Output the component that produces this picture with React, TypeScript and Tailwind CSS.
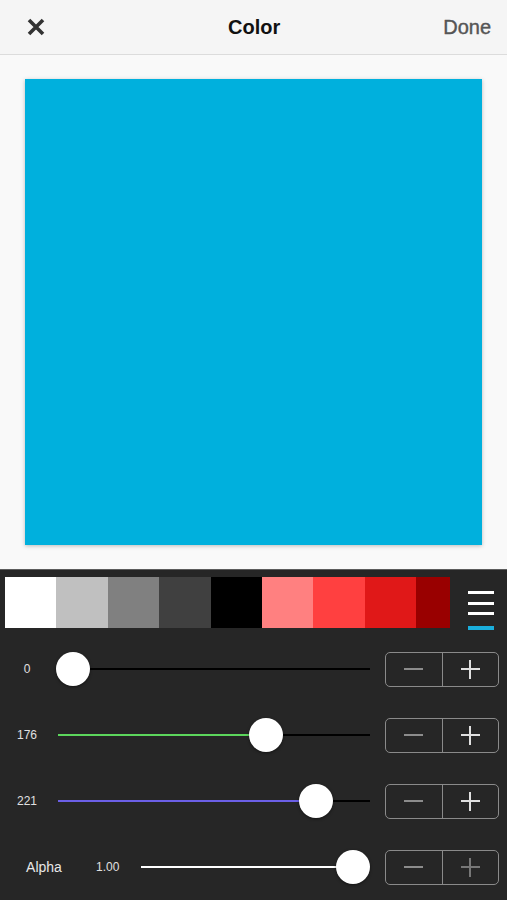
import React from "react";

const swatches = [
  "#ffffff",
  "#c0c0c0",
  "#808080",
  "#404040",
  "#000000",
  "#ff8080",
  "#ff4040",
  "#e01818",
  "#990000",
];

type Row = {
  label: string;
  value: number; // 0..1
  color: string;
  alpha?: boolean;
};

const rows: Row[] = [
  { label: "0", value: 0, color: "#000000" },
  { label: "176", value: 176 / 255, color: "#5cd65c" },
  { label: "221", value: 221 / 255, color: "#6b5fe6" },
  { label: "1.00", value: 1, color: "#ffffff", alpha: true },
];

function Stepper({ plusDim }: { plusDim?: boolean }) {
  return (
    <div className="flex h-[35px] w-[114px] rounded-[5px] border border-[#8a8a8a]">
      <div className="flex flex-1 items-center justify-center border-r border-[#8a8a8a]">
        <div className="h-[2px] w-[19px] bg-[#8c8c8c]" />
      </div>
      <div className="relative flex flex-1 items-center justify-center">
        <div className={`h-[2px] w-[19px] ${plusDim ? "bg-[#777]" : "bg-[#e0e0e0]"}`} />
        <div
          className={`absolute h-[19px] w-[2px] ${plusDim ? "bg-[#777]" : "bg-[#e0e0e0]"}`}
        />
      </div>
    </div>
  );
}

function Slider({ value, color }: { value: number; color: string }) {
  // thumb diameter 34, travels so that it stays inside the track
  const pct = value;
  return (
    <div className="relative h-[34px] flex-1">
      <div className="absolute left-0 right-0 top-1/2 h-[2px] -translate-y-1/2 bg-black" />
      <div
        className="absolute left-0 top-1/2 h-[2px] -translate-y-1/2"
        style={{ width: `calc(15px + ${pct} * (100% - 32px))`, backgroundColor: color }}
      />
      <div
        className="absolute top-0 h-[34px] w-[34px] rounded-full bg-white shadow-[0_1px_3px_rgba(0,0,0,0.5)]"
        style={{ left: `calc(-2px + ${pct} * (100% - 32px))` }}
      />
    </div>
  );
}

export default function App() {
  return (
    <div
      className="flex h-[900px] w-[507px] flex-col overflow-hidden"
      style={{ fontFamily: '"Liberation Sans", Arial, sans-serif' }}
    >
      {/* Header */}
      <div className="flex h-[55px] items-center justify-between border-b border-[#dcdcdc] bg-[#f5f5f5] pl-[27px] pr-[16px]">
        <svg width="18" height="18" viewBox="0 0 18 18">
          <path
            d="M2 2 L16 16 M16 2 L2 16"
            stroke="#333"
            strokeWidth="3.6"
            strokeLinecap="butt"
          />
        </svg>
        <span className="pl-[20px] text-[20px] font-bold text-[#111]">Color</span>
        <span className="text-[20px] text-[#555] [-webkit-text-stroke:0.4px_#555]">Done</span>
      </div>

      {/* Preview */}
      <div className="flex-1 bg-[#f9f9f9] px-[25px] pb-[24px] pt-[24px]">
        <div className="h-full w-full bg-[#00b0dd] shadow-[0_1px_4px_rgba(0,0,0,0.25)]" />
      </div>

      {/* Controls */}
      <div className="h-[331px] shrink-0 border-t border-[#5c5c5c] bg-[#262626]">
        <div className="flex h-[66px] items-start pl-[5px] pt-[7px]">
          <div className="flex h-[51px] w-[445px] overflow-hidden">
            {swatches.map((c) => (
              <div key={c} className="h-full w-[51.4px] shrink-0" style={{ backgroundColor: c }} />
            ))}
          </div>
          <div className="ml-[18px] flex w-[26px] flex-col gap-[7.5px] pt-[14px]">
            <div className="h-[3px] bg-white" />
            <div className="h-[3px] bg-white" />
            <div className="h-[3px] bg-white" />
            <div className="mt-[3px] h-[4px] bg-[#1aaedc]" />
          </div>
        </div>

        {rows.map((r) => (
          <div key={r.label} className="flex h-[66px] items-center">
            {r.alpha ? (
              <>
                <span className="w-[88px] text-center text-[14px] text-[#e8e8e8]">Alpha</span>
                <span className="w-[53px] pl-[8px] text-[12px] text-[#e0e0e0]">{r.label}</span>
              </>
            ) : (
              <span className="w-[58px] pr-[4px] text-center text-[12px] text-[#e0e0e0]">
                {r.label}
              </span>
            )}
            <Slider value={r.value} color={r.color} />
            <div className="ml-[15px] mr-[8px]">
              <Stepper plusDim={r.alpha} />
            </div>
          </div>
        ))}
      </div>
    </div>
  );
}
